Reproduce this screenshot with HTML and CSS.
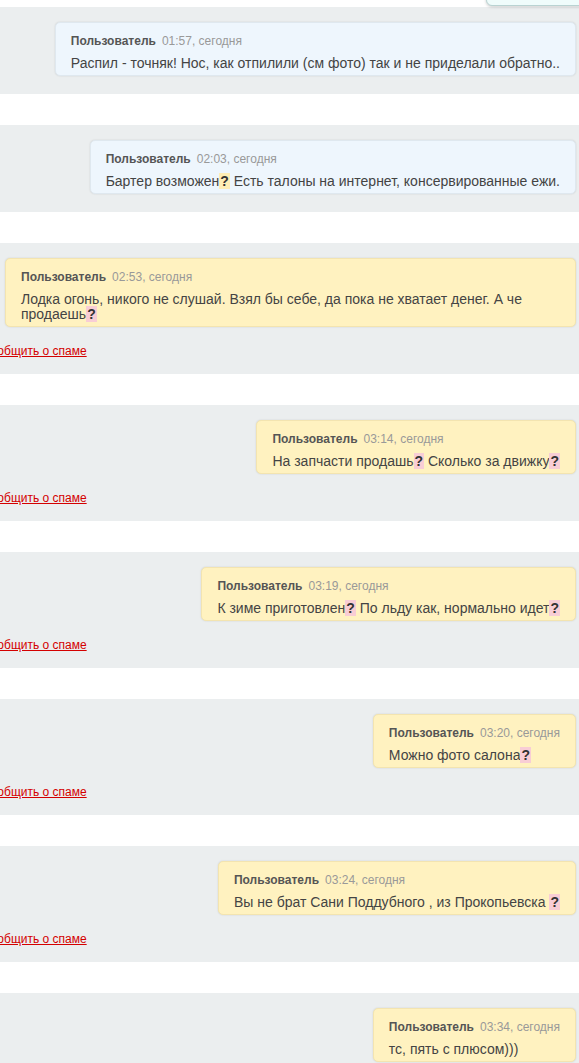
FILE: index.html
```html
<!DOCTYPE html>
<html lang="ru">
<head>
<meta charset="utf-8">
<title>Чат</title>
<link rel="stylesheet" href="styles.css">
</head>
<body>
<div class="top-popup"></div>
<div class="feed">
  <div class="msg-row">
    <div class="bubble bubble-blue">
      <div class="meta"><span class="author">Пользователь</span><span class="time">01:57, сегодня</span></div>
      <div class="text">Распил - точняк! Нос, как отпилили (см фото) так и не приделали обратно..</div>
    </div>
  </div>
  <div class="msg-row">
    <div class="bubble bubble-blue">
      <div class="meta"><span class="author">Пользователь</span><span class="time">02:03, сегодня</span></div>
      <div class="text">Бартер возможен<b class="q">?</b> Есть талоны на интернет, консервированные ежи.</div>
    </div>
  </div>
  <div class="msg-row">
    <div class="bubble bubble-yellow">
      <div class="meta"><span class="author">Пользователь</span><span class="time">02:53, сегодня</span></div>
      <div class="text">Лодка огонь, никого не слушай. Взял бы себе, да пока не хватает денег. А че продаешь<b class="q">?</b></div>
    </div>
    <div class="spam"><a href="#">Сообщить о спаме</a></div>
  </div>
  <div class="msg-row">
    <div class="bubble bubble-yellow">
      <div class="meta"><span class="author">Пользователь</span><span class="time">03:14, сегодня</span></div>
      <div class="text">На запчасти продашь<b class="q">?</b> Сколько за движку<b class="q">?</b></div>
    </div>
    <div class="spam"><a href="#">Сообщить о спаме</a></div>
  </div>
  <div class="msg-row">
    <div class="bubble bubble-yellow">
      <div class="meta"><span class="author">Пользователь</span><span class="time">03:19, сегодня</span></div>
      <div class="text">К зиме приготовлен<b class="q">?</b> По льду как, нормально идет<b class="q">?</b></div>
    </div>
    <div class="spam"><a href="#">Сообщить о спаме</a></div>
  </div>
  <div class="msg-row">
    <div class="bubble bubble-yellow">
      <div class="meta"><span class="author">Пользователь</span><span class="time">03:20, сегодня</span></div>
      <div class="text">Можно фото салона<b class="q">?</b></div>
    </div>
    <div class="spam"><a href="#">Сообщить о спаме</a></div>
  </div>
  <div class="msg-row">
    <div class="bubble bubble-yellow">
      <div class="meta"><span class="author">Пользователь</span><span class="time">03:24, сегодня</span></div>
      <div class="text">Вы не брат Сани Поддубного , из Прокопьевска <b class="q">?</b></div>
    </div>
    <div class="spam"><a href="#">Сообщить о спаме</a></div>
  </div>
  <div class="msg-row">
    <div class="bubble bubble-yellow">
      <div class="meta"><span class="author">Пользователь</span><span class="time">03:34, сегодня</span></div>
      <div class="text">тс, пять с плюсом)))</div>
    </div>
    <div class="spam"><a href="#">Сообщить о спаме</a></div>
  </div>
</div>
</body>
</html>
```

FILE: styles.css
```css
html, body {
  margin: 0;
  padding: 0;
  background: #ffffff;
  overflow: hidden;
}
body {
  font-family: "Liberation Sans", Arial, sans-serif;
  color: #444;
}
.top-popup {
  position: absolute;
  top: -10px;
  left: 486px;
  width: 110px;
  height: 14px;
  background: #effcfb;
  border: 1px solid #b9d3d2;
  border-radius: 6px;
  box-shadow: 0 1px 3px rgba(0,0,0,0.2);
  z-index: 2;
}
.feed {
  display: flex;
  flex-direction: column;
  gap: 31px;
  padding-top: 7px;
}
.msg-row {
  background: #ebeeef;
  padding: 15px 3px 18px 0;
  display: flex;
  flex-direction: column;
  align-items: flex-end;
}
.bubble {
  box-sizing: border-box;
  max-width: 571px;
  padding: 11px 15px 4px;
  border-radius: 5px;
  box-shadow: 0 0 2px rgba(0,0,0,0.12);
}
.bubble-blue {
  background: #eef6fd;
  border: 1px solid #dfe8ef;
}
.bubble-yellow {
  background: #fff2c0;
  border: 1px solid #f3e4b0;
}
.meta {
  font-size: 12px;
  line-height: 15px;
  margin-bottom: 7px;
  white-space: nowrap;
}
.author {
  font-weight: bold;
  color: #555;
  margin-right: 6px;
}
.time {
  color: #999;
}
.text {
  font-size: 14px;
  line-height: 15px;
  color: #444;
}
.q {
  color: #333;
  padding: 0 1px;
}
.bubble-blue .q {
  background: #ffeeb5;
}
.bubble-yellow .q {
  background: #f8cdd5;
}
.spam {
  align-self: flex-start;
  margin-top: 17px;
  margin-left: -18px;
  font-size: 12px;
  line-height: 15px;
  margin-bottom: -3px;
}
.spam a {
  color: #d40000;
  text-decoration: underline;
}
```
